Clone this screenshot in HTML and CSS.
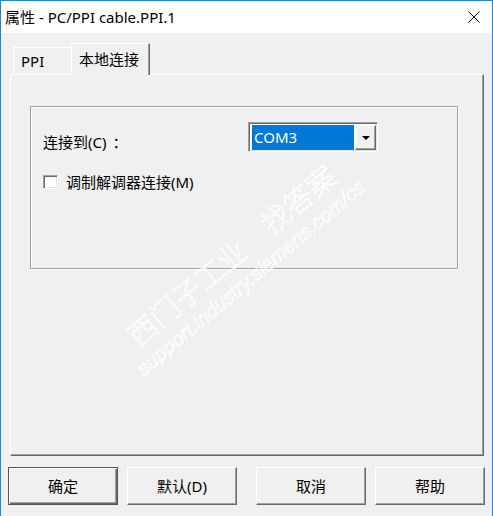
FILE: index.html
```html
<!DOCTYPE html>
<html lang="zh-CN">
<head>
<meta charset="utf-8">
<title>属性 - PC/PPI cable.PPI.1</title>
<link rel="stylesheet" href="styles.css">
</head>
<body>
<div class="window">
  <div class="titlebar">
    <span class="title">属性 - PC/PPI cable.PPI.1</span>
    <svg class="close" width="12" height="12" viewBox="0 0 12 12"><path d="M0.5 0.5 L11.5 11.5 M11.5 0.5 L0.5 11.5" stroke="#000" stroke-width="1" fill="none"/></svg>
  </div>
  <div class="content">
    <div class="tabs">
      <div class="tab">PPI</div>
      <div class="tab tab-active">本地连接</div>
    </div>
    <div class="panel">
      <div class="group">
        <div class="row">
          <span class="label">连接到(C)<span class="colon">：</span></span>
          <div class="combo">
            <span class="combo-value">COM3</span>
            <span class="combo-btn"><span class="arrow"></span></span>
          </div>
        </div>
        <div class="row-check">
          <span class="checkbox"></span>
          <span class="check-label">调制解调器连接(M)</span>
        </div>
      </div>
    </div>
    <div class="buttons">
      <div class="btn-group">
        <div class="btn btn-default">确定</div>
        <div class="btn">默认(D)</div>
      </div>
      <div class="btn-group">
        <div class="btn">取消</div>
        <div class="btn">帮助</div>
      </div>
    </div>
  </div>
  <div class="watermark">
    <div class="wm-cn">西门子工业　找答案</div>
    <div class="wm-en">support.industry.siemens.com/cs</div>
  </div>
</div>
</body>
</html>
```
FILE: styles.css
```css
html, body {
  margin: 0;
  padding: 0;
}
body {
  background: #f0f0f0;
  font-family: "Noto Sans", "Noto Sans CJK SC", sans-serif;
  font-size: 15px;
  color: #000;
  text-spacing-trim: space-all;
}
.window {
  position: relative;
  width: 493px;
  height: 516px;
  box-sizing: border-box;
  border-top: 1px solid #1e84d8;
  border-left: 1px solid #1e84d8;
  border-right: 1px solid #1e84d8;
  background: #f0f0f0;
  overflow: hidden;
}
.titlebar {
  height: 32px;
  background: #fff;
  display: flex;
  align-items: center;
  justify-content: space-between;
  padding-left: 4px;
  padding-right: 12px;
}
.title {
  line-height: 20px;
  white-space: nowrap;
}
.close {
  display: block;
}
.content {
  padding: 10px 8px 0 9px;
}
.tabs {
  display: flex;
  align-items: flex-end;
  height: 32px;
  margin-bottom: -1px;
  position: relative;
  z-index: 1;
}
.tab {
  box-sizing: border-box;
  height: 27px;
  width: 58px;
  margin-left: 3px;
  margin-bottom: 1px;
  border-top: 1px solid #fff;
  border-left: 1px solid #fff;
  padding-left: 7px;
  padding-top: 3px;
  line-height: 20px;
  background: #f0f0f0;
}
.tab-active {
  height: 32px;
  width: 79px;
  margin-left: 0;
  margin-bottom: 0;
  border-right: 1px solid #696969;
  box-shadow: inset -1px 0 #a0a0a0;
  padding-top: 5px;
}
.panel {
  box-sizing: border-box;
  height: 382px;
  border: 1px solid;
  border-color: #fff #696969 #696969 #fff;
  box-shadow: inset -1px -1px #a0a0a0;
  padding: 31px 0 0 19px;
}
.group {
  box-sizing: border-box;
  width: 428px;
  height: 163px;
  border: 1px solid #a0a0a0;
  box-shadow: inset 1px 1px #fff, 1px 1px #fff;
  padding: 15px 0 0 12px;
}
.row {
  display: flex;
  align-items: flex-start;
  height: 30px;
}
.label {
  width: 205px;
  line-height: 20px;
  margin-top: 10px;
  white-space: nowrap;
}
.colon {
  font-family: "Noto Sans CJK SC", sans-serif;
  display: inline-block;
  width: 15px;
  text-align: center;
  margin-left: 6px;
}
.combo {
  box-sizing: border-box;
  width: 130px;
  height: 30px;
  display: flex;
  border: 1px solid;
  border-color: #a0a0a0 #fff #fff #a0a0a0;
  box-shadow: inset 1px 1px #696969, inset -1px -1px #e3e3e3;
  background: #fff;
  padding: 2px 1px 1px 3px;
}
.combo-value {
  flex: 1;
  background: #0078d7;
  color: #fff;
  line-height: 24px;
  padding-left: 2px;
  margin-right: 1px;
}
.combo-btn {
  box-sizing: border-box;
  width: 21px;
  display: flex;
  align-items: center;
  justify-content: center;
  background: #f0f0f0;
  border: 1px solid;
  border-color: #fff #696969 #696969 #fff;
  box-shadow: inset -1px -1px #a0a0a0;
}
.arrow {
  width: 0;
  height: 0;
  border-left: 4px solid transparent;
  border-right: 4px solid transparent;
  border-top: 4px solid #000;
}
.row-check {
  display: flex;
  align-items: center;
  height: 20px;
  margin-top: 20px;
}
.checkbox {
  box-sizing: border-box;
  width: 15px;
  height: 14px;
  background: #fff;
  border: 1px solid;
  border-color: #a0a0a0 #fff #fff #a0a0a0;
  box-shadow: inset 1px 1px #696969, inset -1px -1px #e3e3e3;
}
.check-label {
  margin-left: 8px;
  line-height: 20px;
}
.buttons {
  display: flex;
  justify-content: space-between;
  margin: 11px -1px 0 -2px;
}
.btn-group {
  display: flex;
  gap: 9px;
}
.btn {
  box-sizing: border-box;
  width: 110px;
  height: 38px;
  display: flex;
  align-items: center;
  justify-content: center;
  border: 1px solid;
  border-color: #fff #696969 #696969 #fff;
  box-shadow: inset -1px -1px #a0a0a0;
  background: #f0f0f0;
  line-height: 20px;
}
.btn-default {
  border-color: #555;
  box-shadow: inset 1px 1px #fff, inset -1px -1px #696969, inset -2px -2px #a0a0a0;
}
.watermark {
  position: absolute;
  left: 108px;
  top: 333px;
  transform-origin: 0 0;
  transform: rotate(-40deg);
  pointer-events: none;
  white-space: nowrap;
  z-index: 5;
  color: rgba(240, 240, 240, 0.6);
  -webkit-text-stroke: 1px rgba(255, 255, 255, 0.95);
  text-shadow: 1px 1px 0 rgba(0, 0, 0, 0.06);
}
.wm-cn {
  font-family: "Noto Sans CJK SC", sans-serif;
  font-weight: 300;
  font-size: 29px;
  line-height: 34px;
  padding-left: 14px;
}
.wm-en {
  font-family: "Liberation Sans", sans-serif;
  font-style: italic;
  font-size: 20px;
  line-height: 24px;
  margin-top: 2px;
}
```
